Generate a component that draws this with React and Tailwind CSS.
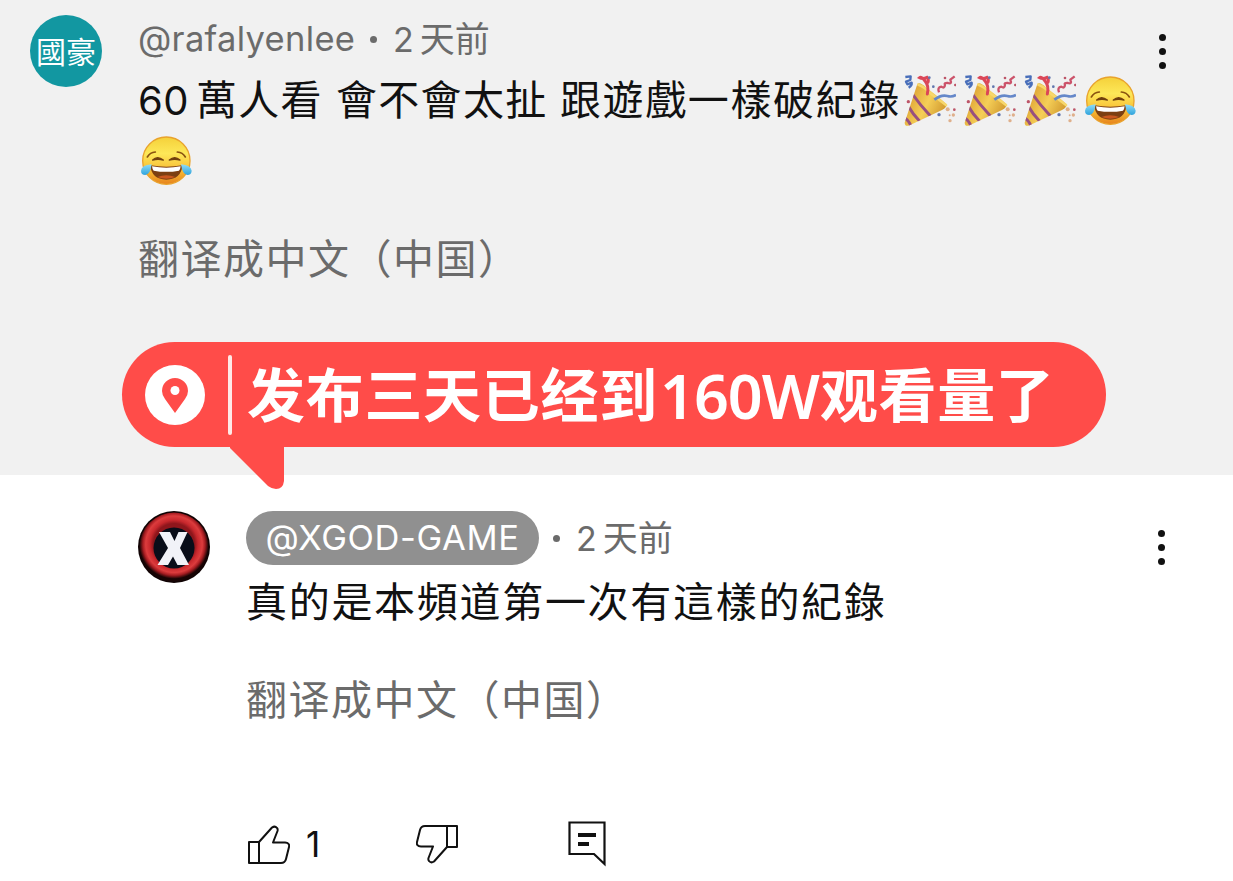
import React from 'react';

const JoyEmoji = () => (
  <svg viewBox="0 0 156 156" className="w-[52px] h-[52px] shrink-0">
    <defs>
      <linearGradient id="joyFace" x1="0" y1="0" x2="0" y2="1">
        <stop offset="0" stopColor="#f5d03a" />
        <stop offset="0.35" stopColor="#fde858" />
        <stop offset="0.7" stopColor="#f8bd35" />
        <stop offset="1" stopColor="#e6821c" />
      </linearGradient>
      <linearGradient id="joyTear" x1="0" y1="0" x2="0" y2="1">
        <stop offset="0" stopColor="#8fdcf8" />
        <stop offset="1" stopColor="#2fa3dc" />
      </linearGradient>
    </defs>
    <circle cx="79" cy="77" r="71" fill="url(#joyFace)" stroke="#e9a32d" strokeWidth="4" />
    <path d="M22 66Q30 52 46 51" fill="none" stroke="#8a5310" strokeWidth="5" strokeLinecap="round" />
    <path d="M136 66Q128 52 112 51" fill="none" stroke="#8a5310" strokeWidth="5" strokeLinecap="round" />
    <path d="M38 75Q52 61 70 75Q54 71 38 75Z" fill="#70400d" stroke="#70400d" strokeWidth="4" strokeLinejoin="round" />
    <path d="M88 75Q104 61 120 75Q104 71 88 75Z" fill="#70400d" stroke="#70400d" strokeWidth="4" strokeLinejoin="round" />
    <path d="M31 91Q79 99 127 91Q124 133 79 134Q34 133 31 91Z" fill="#7c3f12" />
    <path d="M36 94Q79 102 122 94Q121 103 117 107Q79 114 41 107Q37 103 36 94Z" fill="#fff" />
    <path d="M52 126Q79 115 106 126Q79 137 52 126Z" fill="#c9571f" />
    <path d="M35 88Q4 91 3 107Q3 120 16 120Q31 119 35 88Z" fill="url(#joyTear)" />
    <path d="M123 88Q153 91 155 107Q154 120 142 120Q127 119 123 88Z" fill="url(#joyTear)" />
  </svg>
);

const PartyEmoji = () => (
  <svg viewBox="0 0 156 156" className="w-[52px] h-[52px] shrink-0">
    <defs>
      <linearGradient id="partyCone" x1="0" y1="0.3" x2="1" y2="0.8">
        <stop offset="0" stopColor="#d99a2c" />
        <stop offset="0.5" stopColor="#f5cf58" />
        <stop offset="1" stopColor="#c98d25" />
      </linearGradient>
      <clipPath id="coneClip">
        <path d="M40 27Q48 20 68 39Q106 67 127 88Q129 98 114 105L14 152Q3 155 2 143Z" />
      </clipPath>
    </defs>
    <path d="M40 27Q48 20 68 39Q106 67 127 88Q129 98 114 105L14 152Q3 155 2 143Z" fill="url(#partyCone)" />
    <g clipPath="url(#coneClip)" fill="none" stroke="#98507f" strokeWidth="9">
      <path d="M25 57Q49 91 80 124" />
      <path d="M13 94Q27 119 49 141" />
      <path d="M-2 127Q12 132 22 154" />
    </g>
    <path d="M43 29Q60 34 82 57Q104 73 126 90" fill="none" stroke="#f7d76b" strokeWidth="8" strokeLinecap="round" />
    <path d="M70 57Q76 33 63 18Q52 4 47 8Q56 13 69 7Q75 13 72 22" fill="none" stroke="#db4758" strokeWidth="9" strokeLinecap="round" />
    <path d="M4 6L20 4L19 15L6 20L10 28L23 23Q25 31 14 38" fill="none" stroke="#496fba" strokeWidth="7" strokeLinejoin="round" />
    <path d="M91 74Q112 58 130 63Q143 67 156 60" fill="none" stroke="#6588c9" strokeWidth="8" />
    <path d="M105 52Q99 37 112 35Q122 42 123 29Q119 23 132 24Q145 28 139 14L152 4" fill="none" stroke="#cc536a" strokeWidth="7" strokeLinejoin="round" />
    <g fill="#bd5568">
      <circle cx="13" cy="80" r="5" />
      <circle cx="123" cy="9" r="4" />
      <circle cx="151" cy="104" r="4" />
      <circle cx="154" cy="30" r="4" />
    </g>
    <g fill="#6075ad">
      <circle cx="76" cy="8" r="4" />
      <circle cx="88" cy="35" r="4" />
      <circle cx="105" cy="119" r="5" />
    </g>
    <g fill="#dfb08c">
      <circle cx="131" cy="103" r="6" />
      <circle cx="148" cy="120" r="5" />
      <circle cx="137" cy="121" r="3" />
      <circle cx="138" cy="137" r="5" />
    </g>
  </svg>
);

const MoreButton = () => (
  <button className="flex flex-col items-center gap-[7px] w-[10px]" aria-label="More">
    <span className="size-[7px] rounded-full bg-[#111]" />
    <span className="size-[7px] rounded-full bg-[#111]" />
    <span className="size-[7px] rounded-full bg-[#111]" />
  </button>
);

const ChannelAvatar = () => (
  <svg viewBox="0 0 72 72" className="size-[72px] shrink-0">
    <defs>
      <radialGradient id="ring" cx="0.5" cy="0.46" r="0.5">
        <stop offset="0.6" stopColor="#8e161c" />
        <stop offset="0.7" stopColor="#c8282d" />
        <stop offset="0.82" stopColor="#dc3c3d" />
        <stop offset="0.9" stopColor="#a81d22" />
        <stop offset="1" stopColor="#180404" />
      </radialGradient>
    </defs>
    <circle cx="36" cy="36" r="36" fill="#100304" />
    <circle cx="36" cy="36" r="34.500" fill="url(#ring)" />
    <circle cx="36" cy="37" r="20.500" fill="#090d19" />
    <path d="M21 21H32L36.500 30L40.500 21H49.500L42 37L51 54H39.500L35 45.500L30 54H19.500L30 37Z" fill="#f1f2f8" />
  </svg>
);

const ThumbIcon = ({ className }) => (
  <svg viewBox="0 0 42 40" className={className} fill="none" stroke="#111" strokeWidth="2" strokeLinejoin="round">
    <path d="M1 17H11V38H1Z" />
    <path d="M11 17L24 2.5Q27 .5 29 3Q30 4 29.5 6L25 17.5H37Q42 18 41 22L38 34Q37 38 33 38H11" />
  </svg>
);

const Callout = () => (
  <div className="absolute left-[122px] top-[342px] w-[984px] h-[105px] rounded-full bg-[#ff4c49] flex items-center text-white">
    <svg viewBox="0 0 60 60" className="ml-[23px] size-[60px] shrink-0">
      <circle cx="30" cy="30" r="30" fill="#fff" />
      <path d="M30 48L20 34Q17 30 17 26A13 13 0 0 1 43 26Q43 30 40 34Z" fill="#ff4c49" />
      <circle cx="30" cy="25.500" r="4.500" fill="#fff" />
    </svg>
    <span className="ml-[23px] w-1 h-[80px] rounded-full bg-[#ffe9e7]" />
    <div className="ml-[15px] pt-[2px] flex items-center whitespace-nowrap text-[58px] leading-[80px] font-bold">
      <span className="w-[413px] tracking-[0.7px]">发布三天已经到</span>
      <span className="w-[160px] font-['Noto_Sans'] font-semibold text-[61px] tracking-[-1px]">160W</span>
      <span className="tracking-[0.6px]">观看量了</span>
    </div>
    <svg viewBox="0 0 56 44" className="absolute left-[108px] top-[103px] w-[56px] h-[44px]">
      <path d="M0 0H54V36Q53 44 46 44Q42 44 38 41L0 3Z" fill="#ff4c49" />
    </svg>
  </div>
);

const App = () => {
  return (
    <div className="relative w-[1233px] h-[881px] overflow-hidden bg-white text-[#111] font-['Inter','Noto_Sans_CJK_SC',sans-serif]">
      <section className="h-[475px] bg-[#f1f1f1] flex pl-[30px] pt-[15px]">
        <div className="size-[72px] shrink-0 rounded-full bg-[#1297a1] text-white flex items-center justify-center pb-[2px] text-[30px] font-['Noto_Sans_CJK_SC']">
          國豪
        </div>
        <div className="ml-[36px] w-[1017px] whitespace-nowrap">
          <div className="h-12 flex items-center text-[#6b6b6b] text-[34px]">
            <span className="w-[218px] text-[34.500px] tracking-[0.3px]">@rafalyenlee</span>
            <span className="ml-[14px] size-[7px] rounded-full bg-[#6b6b6b]" />
            <span className="ml-[16px]">2</span>
            <span className="ml-[6px] text-[35px]">天前</span>
          </div>
          <div className="mt-[8px] h-[60px] flex items-center text-[41px]">
            <span className="w-[58px] text-[40px] tracking-[0.5px]">60</span>
            <span className="w-[140px] tracking-[1.3px]">萬人看</span>
            <span className="w-[224px] tracking-[1.3px]">會不會太扯</span>
            <span className="w-[344px] tracking-[1.6px]">跟遊戲一樣破紀錄</span>
            <span className="flex gap-2">
              <PartyEmoji />
              <PartyEmoji />
              <PartyEmoji />
              <JoyEmoji />
            </span>
          </div>
          <div className="h-[60px] flex items-center pl-[2px]">
            <JoyEmoji />
          </div>
          <p className="mt-[38px] h-[60px] leading-[60px] text-[41px] tracking-[1.5px] text-[#6b6b6b]">翻译成中文（中国）</p>
        </div>
        <div className="mt-[19px] ml-[2px]">
          <MoreButton />
        </div>
      </section>

      <section className="flex pl-[138px] pt-[36px]">
        <ChannelAvatar />
        <div className="ml-[36px] w-[908px] whitespace-nowrap">
          <div className="h-[54px] flex items-center text-[34px] text-[#6b6b6b]">
            <span className="w-[293px] h-[54px] rounded-full bg-[#909090] text-white flex items-center justify-center text-[34.500px] tracking-[0.6px]">
              @XGOD-GAME
            </span>
            <span className="ml-[14px] size-[7px] rounded-full bg-[#6b6b6b]" />
            <span className="ml-[16px]">2</span>
            <span className="ml-[6px] text-[35px]">天前</span>
          </div>
          <p className="mt-[4px] h-[60px] leading-[60px] text-[41px] tracking-[1.7px] font-['Noto_Sans_CJK_SC']">
            真的是本頻道第一次有這樣的紀錄
          </p>
          <p className="mt-[41px] h-[60px] leading-[60px] text-[41px] tracking-[1.5px] text-[#6b6b6b]">翻译成中文（中国）</p>
          <div className="mt-[91px] h-[46px] flex items-center">
            <ThumbIcon className="ml-[2px] mt-[2px] w-[42px] h-10" />
            <span className="ml-[16px] w-[110px] text-[35px]">1</span>
            <ThumbIcon className="w-[42px] h-10 rotate-180" />
            <svg viewBox="0 0 38 46" className="ml-[110px] w-[38px] h-[46px]" fill="none" stroke="#111" strokeWidth="2.200">
              <path d="M1.500 1.500H36.500V43L26 33H1.500Z" />
              <path d="M10 14H28M10 23H21" strokeWidth="4" />
            </svg>
          </div>
        </div>
        <div className="mt-[19px] ml-[2px]">
          <MoreButton />
        </div>
      </section>

      <Callout />
    </div>
  );
};

export default App;
